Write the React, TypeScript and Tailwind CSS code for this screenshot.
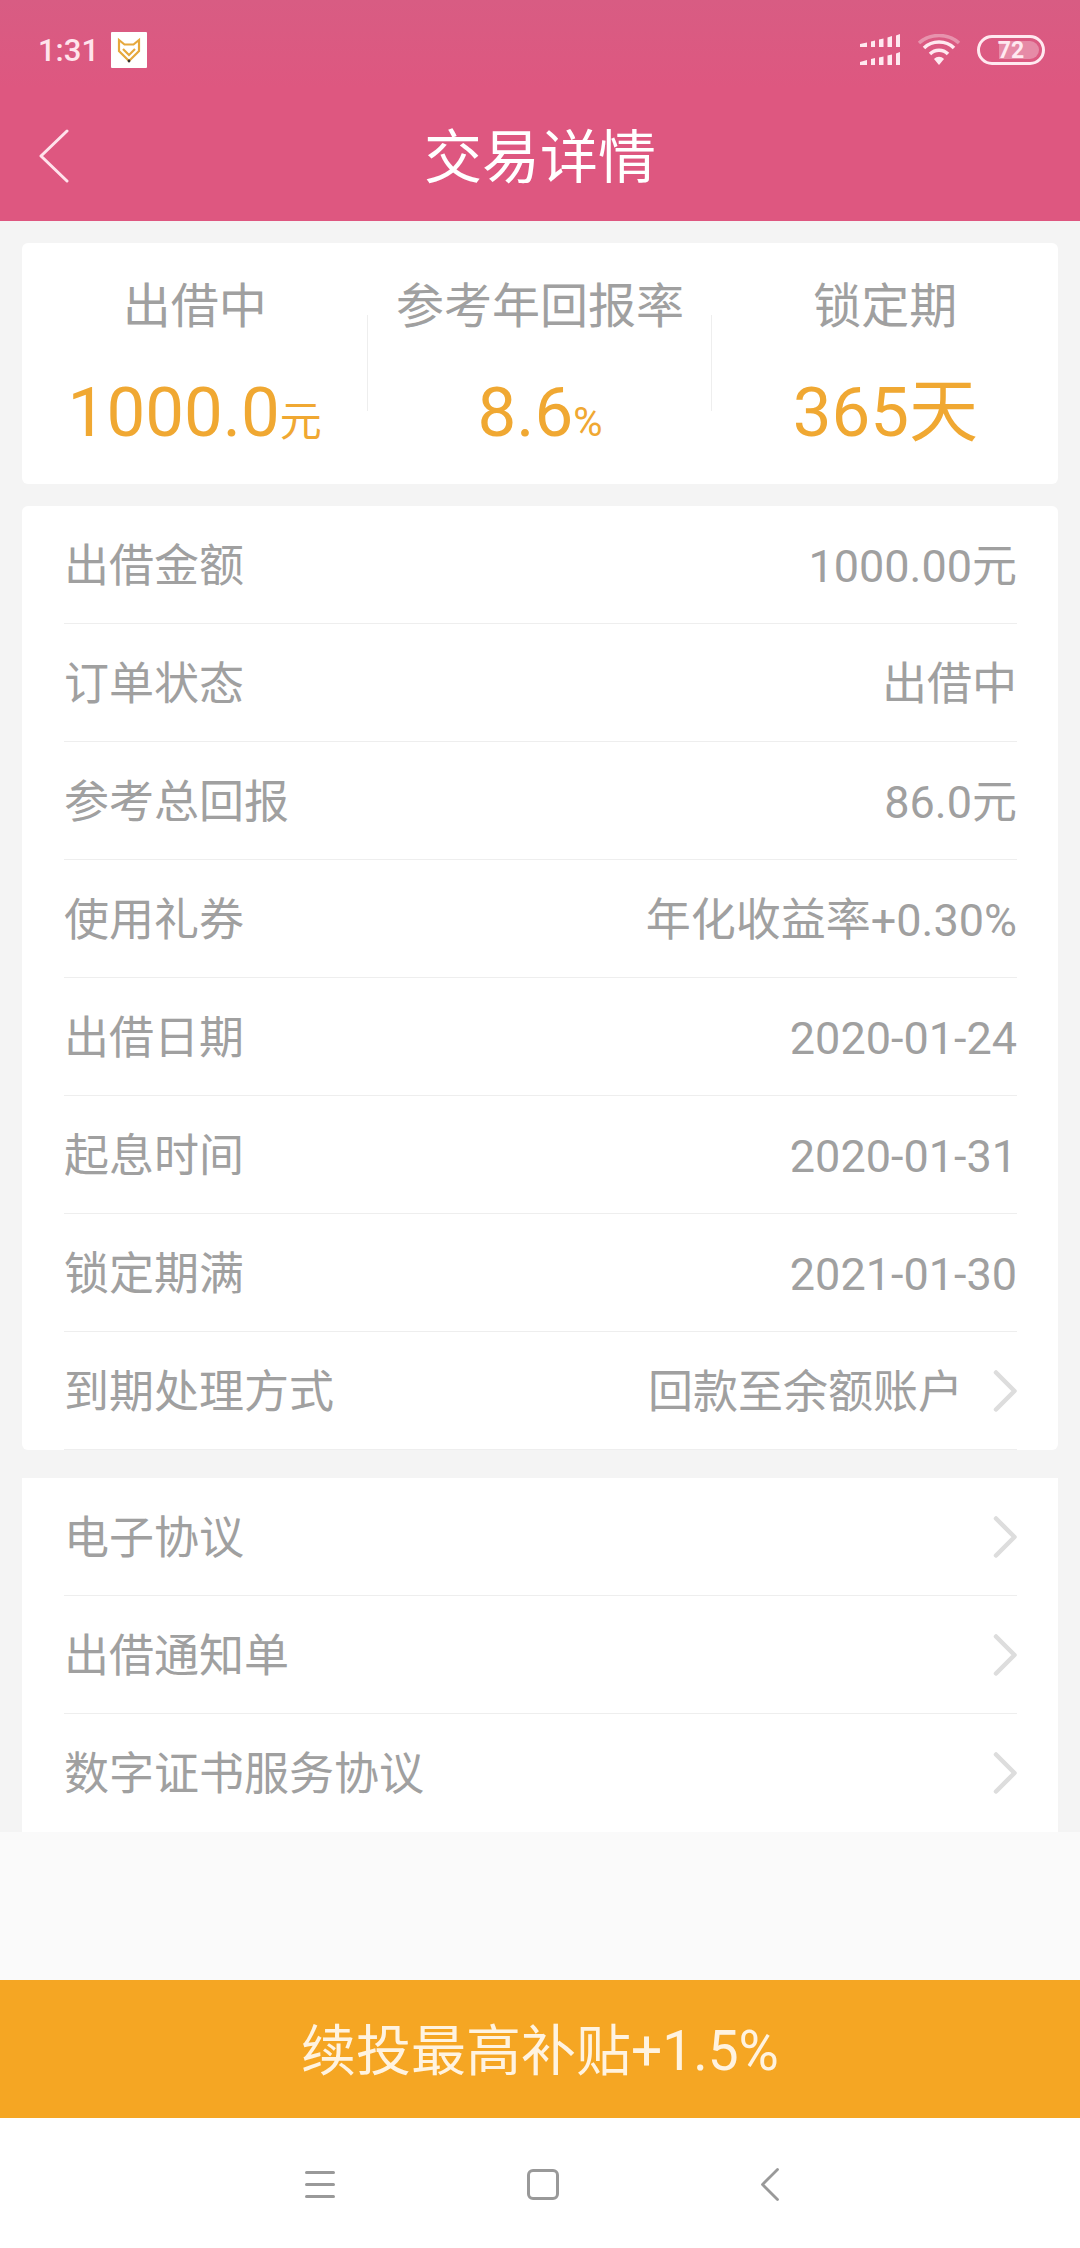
const FONT = "font-['Roboto','Noto_Sans_CJK_SC',sans-serif]";

const summary = [
  { label: "出借中", value: "1000.0", unit: "元", unitClass: "text-[42px]" },
  { label: "参考年回报率", value: "8.6", unit: "%", unitClass: "text-[40px]" },
  { label: "锁定期", value: "365", unit: "天", unitClass: "text-[69px]" },
];

const details = [
  { label: "出借金额", value: "1000.00元" },
  { label: "订单状态", value: "出借中" },
  { label: "参考总回报", value: "86.0元" },
  { label: "使用礼券", value: "年化收益率+0.30%" },
  { label: "出借日期", value: "2020-01-24" },
  { label: "起息时间", value: "2020-01-31" },
  { label: "锁定期满", value: "2021-01-30" },
  { label: "到期处理方式", value: "回款至余额账户", arrow: true },
];

const links = ["电子协议", "出借通知单", "数字证书服务协议"];

const Arrow = () => (
  <svg width="24" height="42" viewBox="0 0 24 42" fill="none" className="ml-[30px] mt-[-3px] shrink-0">
    <path d="M3 2.500 L21.500 21 L3 39.500" stroke="#dddddd" strokeWidth="4.500" strokeLinecap="round" strokeLinejoin="round" />
  </svg>
);

const StatusBar = () => (
  <div className="flex h-[88px] items-center justify-between bg-linear-to-b from-[#d85c83] to-[#de5780] pl-[38px] pr-[35px] pt-[12px]">
    <div className="flex items-center gap-[12px]">
      <span className="text-[31px] font-medium leading-none text-[#ffe3ec]">1:31</span>
      <div className="flex h-[36px] w-[36px] items-center justify-center rounded-[1px] bg-white">
        <svg width="24" height="26" viewBox="0 0 24 26" fill="none">
          <path d="M2 3 L7.500 7.500 H16.500 L22 3 V14 L12 24 L2 14 Z M6 12 L12 18 L18 12" stroke="#e6a83c" strokeWidth="2.200" />
          <circle cx="12" cy="24" r="1.400" fill="#333" />
        </svg>
      </div>
    </div>
    <div className="flex items-center">
      <svg width="42" height="32" viewBox="0 0 42 32" fill="#ffe9f0">
        <path d="M1 10 L8 8.500 V13 H1 Z M12 7.500 L16 6.500 V13 H12 Z M20 5.500 L24.500 4.500 V13 H20 Z M28.500 3.500 L33 2 V13 H28.500 Z M37 1.500 L41 0 V13 H37 Z" />
        <path d="M1 28 L8 26 V31 H1 Z M12 25 L16 24 V31 H12 Z M20 23.500 L24.500 22.500 V31 H20 Z M28.500 21.500 L33 20.500 V31 H28.500 Z M37 19.500 L41 18 V31 H37 Z" />
      </svg>
      <svg width="44" height="32" viewBox="0 0 44 32" fill="none" className="ml-[16px]">
        <path d="M2 9 C13 -1 31 -1 42 9" stroke="#ffffff" strokeOpacity="0.35" strokeWidth="3.500" />
        <path d="M7 14 C15 6 29 6 37 14" stroke="#ffe9f0" strokeWidth="3.500" />
        <path d="M13 20 C18 15 26 15 31 20" stroke="#ffe9f0" strokeWidth="3.500" />
        <path d="M17 25 C20 22 24 22 27 25 L22 31 Z" fill="#ffe9f0" />
      </svg>
      <div className="relative ml-[16px] flex h-[30px] w-[68px] items-center justify-end rounded-full border-[3px] border-[#ffe9f0] p-[3px]">
        <div className="h-full w-[40px] rounded-r-full bg-white/30" />
        <span className="absolute inset-0 flex items-center justify-center text-[23px] font-bold leading-none text-[#ffe9f0]">72</span>
      </div>
    </div>
  </div>
);

const SummaryCard = () => (
  <div className="mx-[22px] mt-[22px] flex h-[241px] rounded-[6px] bg-white">
    {summary.map((item, i) => (
      <div key={item.label} className="relative flex flex-1 flex-col items-center">
        {i === 1 && <div className="absolute left-0 top-[72px] h-[96px] w-px bg-[#eeeeee]" />}
        {i === 2 && <div className="absolute left-[-2px] top-[72px] h-[96px] w-px bg-[#eeeeee]" />}
        <div className="mt-[36px] text-[48px] leading-[56px] text-[#a0a0a0]">{item.label}</div>
        <div className="mt-[36px] flex items-baseline leading-[84px] text-[#f0a832]">
          <span className="text-[69px]">{item.value}</span>
          <span className={item.unitClass}>{item.unit}</span>
        </div>
      </div>
    ))}
  </div>
);

const Row = ({ label, value, arrow, last }: { label: string; value?: string; arrow?: boolean; last?: boolean }) => (
  <div className={`flex h-[118px] items-center justify-between pt-[3px] text-[#a0a0a0] ${last ? "" : "border-b border-[#eeeeee]"}`}>
    <span className="text-[45px] leading-none">{label}</span>
    <div className="flex items-center">
      {value && <span className="text-[45px] leading-none">{value}</span>}
      {arrow && <Arrow />}
    </div>
  </div>
);

export default function App() {
  return (
    <div className={`flex h-[2248px] w-[1080px] flex-col overflow-hidden bg-[#f4f4f4] ${FONT}`}>
      <div className="bg-[#de5780]">
        <StatusBar />
        <div className="relative flex h-[133px] items-center justify-center pt-[6px]">
          <svg width="30" height="54" viewBox="0 0 30 54" fill="none" className="absolute left-[39px] top-[41px]">
            <path d="M28 2 L2 27 L28 52" stroke="#ffe3ec" strokeWidth="3" strokeLinecap="round" strokeLinejoin="round" />
          </svg>
          <h1 className="text-[58px] leading-none text-white">交易详情</h1>
        </div>
      </div>

      <SummaryCard />

      <div className="mx-[22px] mt-[22px] rounded-[6px] bg-white pl-[42px] pr-[41px]">
        {details.map((row) => (
          <Row key={row.label} {...row} />
        ))}
      </div>

      <div className="mx-[22px] mt-[28px] bg-white pl-[42px] pr-[41px]">
        {links.map((label, i) => (
          <Row key={label} label={label} arrow last={i === links.length - 1} />
        ))}
      </div>

      <div className="flex-1 bg-[#fafafa]" />

      <button className="h-[138px] shrink-0 bg-[#f5a623] pt-[4px] text-[55px] leading-none text-[#fff3e0]">续投最高补贴+1.5%</button>

      <div className="flex h-[130px] shrink-0 items-center bg-white pt-[2px]">
        <div className="ml-[305px] flex w-[30px] flex-col gap-[9px]">
          <div className="h-[3px] rounded-full bg-[#999999]" />
          <div className="h-[3px] rounded-full bg-[#999999]" />
          <div className="h-[3px] rounded-full bg-[#999999]" />
        </div>
        <div className="ml-[192px] h-[31px] w-[32px] rounded-[6px] border-[3px] border-[#999999]" />
        <svg width="18" height="33" viewBox="0 0 18 33" fill="none" className="ml-[202px]">
          <path d="M16.500 1.500 L1.500 16.500 L16.500 31.500" stroke="#999999" strokeWidth="2.800" strokeLinecap="round" strokeLinejoin="round" />
        </svg>
      </div>
    </div>
  );
}
